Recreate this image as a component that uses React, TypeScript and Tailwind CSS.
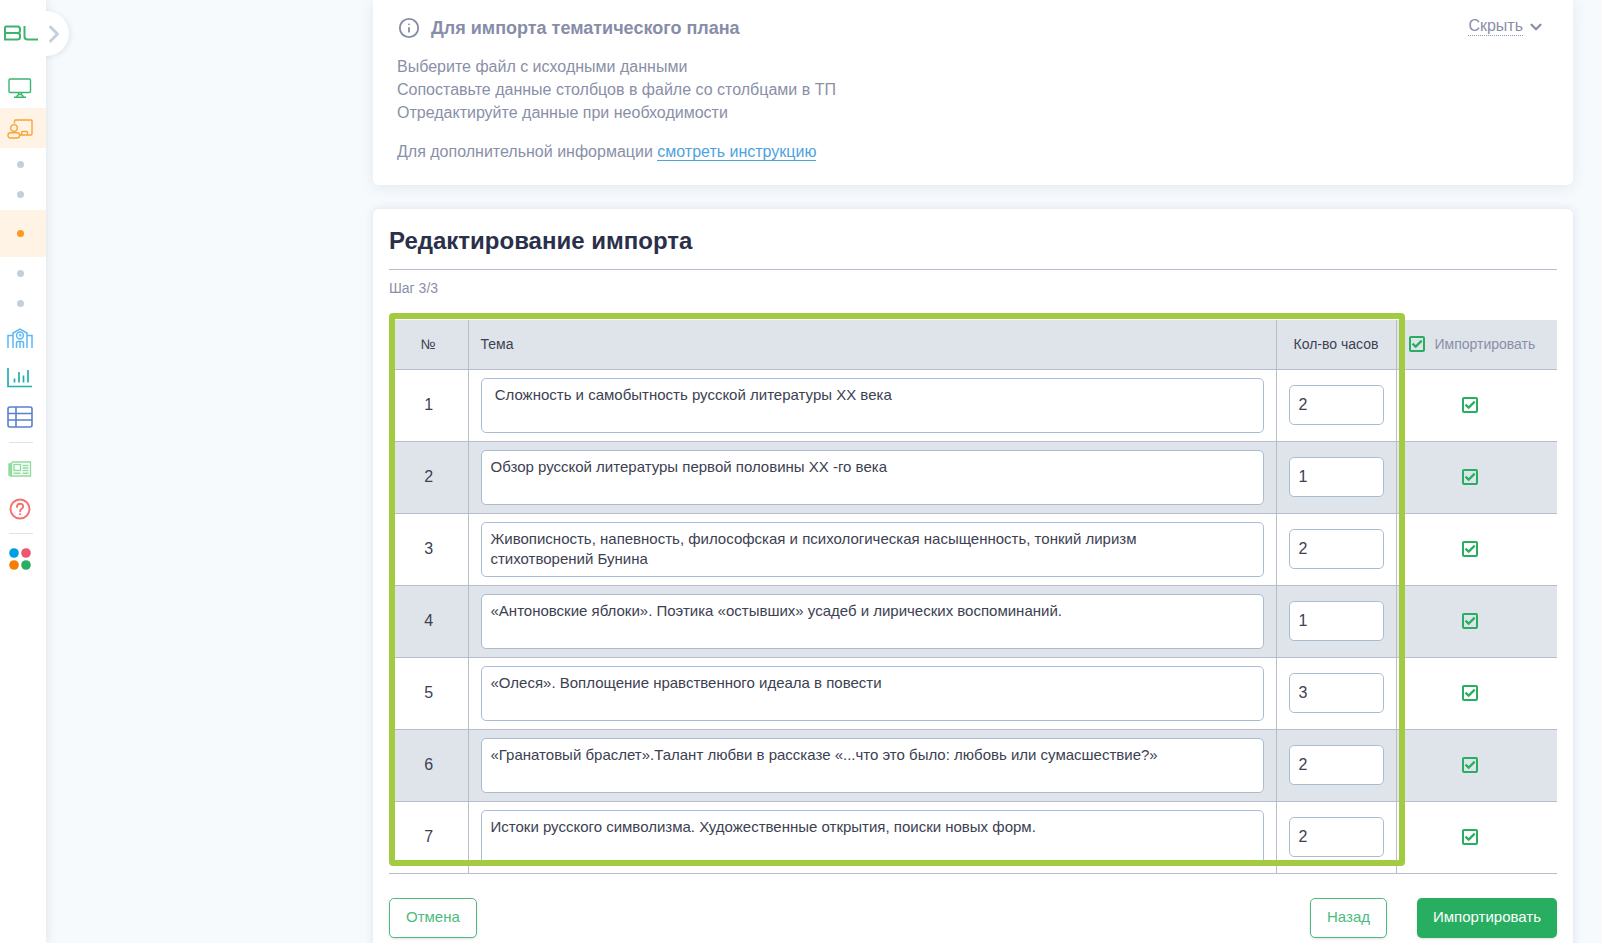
import { ChevronDown, ChevronRight, Info } from "lucide-react";

const rows = [
  { topic: " Сложность и самобытность русской литературы XX века", hours: "2" },
  { topic: "Обзор русской литературы первой половины XX -го века", hours: "1" },
  {
    topic:
      "Живописность, напевность, философская и психологическая насыщенность, тонкий лиризм стихотворений Бунина",
    hours: "2",
  },
  { topic: "«Антоновские яблоки». Поэтика «остывших» усадеб и лирических воспоминаний.", hours: "1" },
  { topic: "«Олеся». Воплощение нравственного идеала в повести", hours: "3" },
  {
    topic: "«Гранатовый браслет».Талант любви в рассказе «...что это было: любовь или сумасшествие?»",
    hours: "2",
  },
  { topic: "Истоки русского символизма. Художественные открытия, поиски новых форм.", hours: "2" },
];

function Dot({ active = false }: { active?: boolean }) {
  return (
    <a
      href="#"
      aria-label="Раздел"
      className={
        active
          ? "flex h-[47px] items-center justify-center bg-[#fff3e6] pr-[5px]"
          : "flex h-[30px] items-center justify-center pr-[5px]"
      }
    >
      <span className={active ? "size-[7px] rounded-full bg-[#fb9a1a]" : "size-[7px] rounded-full bg-[#c3d0dc]"} />
    </a>
  );
}

function Check({ label }: { label: string }) {
  return (
    <span className="relative inline-flex size-4 shrink-0">
      <input
        type="checkbox"
        defaultChecked
        aria-label={label}
        className="peer size-4 appearance-none rounded-[2px] border-2 border-[#27ae60]"
      />
      <svg
        viewBox="0 0 16 16"
        className="pointer-events-none absolute inset-0 hidden size-4 peer-checked:block"
        fill="none"
        stroke="#27ae60"
        strokeWidth="2.2"
      >
        <path d="M3.500 7.600l3.200 3 6-6" />
      </svg>
    </span>
  );
}

function Sidebar() {
  return (
    <aside className="relative z-10 w-[46px] shrink-0 bg-white shadow-[0_0_10px_rgba(90,110,130,0.18)]">
      {/* TOGGLE */}
      <button
        aria-label="Развернуть меню"
        className="absolute left-6 top-[11px] flex size-[45px] items-center justify-end rounded-full bg-white pr-px shadow-[2px_1px_4px_rgba(90,110,130,0.12)]"
      >
        <ChevronRight className="size-[28px] text-[#c3cfdc]" strokeWidth={2.5} />
      </button>

      <div className="relative bg-white">
        {/* LOGO */}
        <a href="#" aria-label="BL" className="flex h-[68px] items-center pb-[2px] pl-1">
          <svg width="34" height="16" viewBox="0 0 34 16" fill="none" stroke="#3db36f" strokeWidth="2">
            <path d="M1 1.500h12.500q2.500 0 2.500 2.500v1.500q0 2.500-2.500 2.500H1M13.500 8q2.500 0 2.500 2.500v1.500q0 2.500-2.500 2.500H1V1.500" />
            <path d="M20.500 1v10.500q0 3 3 3H34" />
          </svg>
        </a>

        <a href="#" aria-label="Рабочий стол" className="flex h-10 items-center justify-center pr-[6px]">
          <svg width="24" height="20" viewBox="0 0 24 20" fill="none" stroke="#3db36f" strokeWidth="1.4">
            <rect x="1" y="1" width="21.500" height="13.500" rx="1.200" />
            <path d="M10.500 14.500v2.300l-2 1.800M13.500 14.500v2.300l2 1.800M10.500 16.500h3M6 19.200h12" />
          </svg>
        </a>
        <a href="#" aria-label="Обучение" className="flex h-10 items-center justify-center bg-[#fff3e6] pr-[6px] pt-px">
          <svg width="26" height="20" viewBox="0 0 26 20" fill="none" stroke="#f7a535" strokeWidth="1.400">
            <path d="M7.500 4.500V2q0-1 1-1H24q1 0 1 1v13q0 1-1 1H12.500" />
            <circle cx="7" cy="8.900" r="3.300" />
            <rect x="1" y="13.800" width="11.500" height="5.200" rx="2.200" />
            <path d="M14.500 16v-2.500q0-1 1-1h4q1 0 1 1V16" />
          </svg>
        </a>
        <nav className="flex flex-col">
          <div className="py-px">
            <Dot />
            <Dot />
          </div>
          <Dot active />
          <div className="pt-px">
            <Dot />
            <Dot />
          </div>
        </nav>

        <a href="#" aria-label="Школа" className="flex h-10 items-center justify-center pr-[6px]">
          <svg width="26" height="20" viewBox="0 0 26 20" fill="none" stroke="#5cb8f5" strokeWidth="1.500">
            <path d="M1 20V7.500h5V20M20 20V7.500h5V20M6 7.500V5l7-4 7 4v2.500M9.500 20v-5q0-1.500 1.500-1.500h4q1.500 0 1.500 1.500v5M13 14v6" />
            <circle cx="13" cy="7.500" r="3.400" />
            <path d="M13 5.800v1.900h1.500" />
          </svg>
        </a>
        <a href="#" aria-label="Отчёты" className="flex h-[39px] items-center justify-center pr-[6px]">
          <svg width="26" height="20" viewBox="0 0 26 20" fill="none" stroke="#22aeb0" strokeWidth="1.700">
            <path d="M1 0v18.500h24M7.500 10.500v4M12 4v10.500M16.500 7.500v7M21 2v12.500" />
          </svg>
        </a>
        <a href="#" aria-label="Журнал" className="flex h-10 items-center justify-center pr-[6px]">
          <svg width="26" height="22" viewBox="0 0 26 22" fill="none" stroke="#5a7fd0" strokeWidth="1.600">
            <rect x="1" y="1" width="24" height="20" rx="2" />
            <path d="M1 7.500h24M1 14h24M9 1v20" />
          </svg>
        </a>
        <hr className="ml-[9px] mr-[13px] mt-[5px] border-[#dfe3e8]" />
        <a href="#" aria-label="Новости" className="mt-[6px] flex h-10 items-center justify-center pr-[6px]">
          <svg width="24" height="16" viewBox="0 0 24 16" fill="none" stroke="#8fdc9f" strokeWidth="1.400">
            <path d="M4 1h18.500v14H2.500q-1.500 0-1.500-1.500V3h2.500M3.500 1v14M2.300 3v11" />
            <rect x="6" y="3.500" width="6.500" height="6" />
            <path d="M14.500 4.500h6M14.500 7h6M14.500 9.500h6M5.500 12.300h7M14.500 12.300h6" />
          </svg>
        </a>
        <a href="#" aria-label="Помощь" className="flex h-[39px] items-center justify-center pr-[6px]">
          <svg width="22" height="22" viewBox="0 0 22 22" fill="none" stroke="#f4716c" strokeWidth="1.900">
            <circle cx="11" cy="11" r="9.500" />
            <path d="M8 9q0-3.300 3.100-3.300T14.200 8.500q0 1.300-1.600 2.300T11.200 13.200" strokeLinecap="round" />
            <path d="M11.200 15.300v1.700" />
          </svg>
        </a>
        <hr className="ml-[9px] mr-[13px] mt-[5px] border-[#dfe3e8]" />
        <a href="#" aria-label="Приложения" className="mt-[5px] flex h-10 items-center justify-center pr-[6px]">
          <svg width="22" height="22" viewBox="0 0 22 22">
            <circle cx="5" cy="5" r="4.800" fill="#009fe3" />
            <circle cx="17" cy="5" r="4.800" fill="#ec566f" />
            <circle cx="5" cy="17" r="4.800" fill="#f57f05" />
            <circle cx="17" cy="17" r="4.800" fill="#27ae60" />
          </svg>
        </a>
      </div>
    </aside>
  );
}

function InfoCard() {
  return (
    <section className="shrink-0 rounded-b-md bg-white pb-[22px] pl-6 pr-7 pt-4 text-[#8a8fa8] shadow-[0_2px_14px_rgba(100,120,140,0.14)]">
      <div className="flex items-start justify-between">
        <h2 className="flex items-center gap-[11px] pl-px text-lg leading-6 font-bold text-[#878da9]">
          <Info className="size-[22px]" strokeWidth={2} />
          Для импорта тематического плана
        </h2>
        <button className="flex items-center gap-1 pt-px text-base leading-5">
          <span className="border-b border-dotted border-[#8a9bb5] leading-[18px]">Скрыть</span>
          <ChevronDown className="size-[18px]" strokeWidth={3} />
        </button>
      </div>
      <div className="mt-[15px] text-base leading-[23px]">
        <p>Выберите файл с исходными данными</p>
        <p>Сопоставьте данные столбцов в файле со столбцами в ТП</p>
        <p>Отредактируйте данные при необходимости</p>
        <p className="mt-4">
          Для дополнительной информации{" "}
          <a href="#" className="border-b border-[#4da3e0] text-[#4da3e0]">
            смотреть инструкцию
          </a>
        </p>
      </div>
    </section>
  );
}

function ImportTable() {
  return (
    <div className="relative mt-[22px]">
      <table className="w-full table-fixed border-collapse text-[#3c4152]">
        <colgroup>
          <col className="w-[79px]" />
          <col />
          <col className="w-[120px]" />
          <col className="w-[161px]" />
        </colgroup>
        <thead>
          <tr className="h-[49px] border-b border-[#b7bdcb] bg-[#dfe4eb] text-sm">
            <th className="border-r border-[#b7bdcb] font-normal">№</th>
            <th className="border-r border-[#b7bdcb] px-3 text-left font-normal">Тема</th>
            <th className="border-r border-[#b7bdcb] font-normal">Кол-во часов</th>
            <th className="pl-3 text-left font-normal text-[#8a8fa8]">
              <span className="flex items-center gap-[10px]">
                <Check label="Импортировать все" />
                Импортировать
              </span>
            </th>
          </tr>
        </thead>
        <tbody>
          {rows.map((row, i) => (
            <tr key={i} className="h-[72px] border-b border-[#b7bdcb] even:bg-[#dfe4eb]">
              <td className="border-r border-[#b7bdcb] pl-px text-center text-base">{i + 1}</td>
              <td className="border-r border-[#b7bdcb] px-3">
                <textarea
                  aria-label={`Тема ${i + 1}`}
                  defaultValue={row.topic}
                  className="block h-[55px] w-full resize-none overflow-hidden rounded-[5px] border border-[#a9bdd0] bg-white py-[6px] pl-[9px] pr-8 text-[15px] leading-5"
                />
              </td>
              <td className="border-r border-[#b7bdcb] px-3">
                <input
                  type="text"
                  aria-label={`Кол-во часов ${i + 1}`}
                  defaultValue={row.hours}
                  className="block h-10 w-full rounded-[5px] border border-[#a9bdd0] bg-white px-[9px] text-base"
                />
              </td>
              <td className="pr-[14px] text-center align-middle">
                <span className="flex justify-center">
                  <Check label={`Импортировать ${i + 1}`} />
                </span>
              </td>
            </tr>
          ))}
        </tbody>
      </table>

      {/* Highlight around the editable columns */}
      <div className="pointer-events-none absolute bottom-2 left-0 right-[152px] top-[-7px] rounded-[4px] border-[6px] border-[#a3cb41]" />
    </div>
  );
}

export default function App() {
  return (
    <div className="flex h-screen overflow-hidden bg-[#f6fafd] font-['Liberation_Sans',Arial,sans-serif]">
      <Sidebar />

      <main className="flex min-w-0 flex-1 flex-col gap-6 pl-[327px] pr-[29px]">
        <InfoCard />

        <section className="flex-1 rounded-t-md bg-white px-4 pt-4 shadow-[0_0_8px_rgba(100,130,160,0.2)]">
          <h1 className="border-b border-[#b7bdcb] pb-3 text-2xl leading-8 font-bold text-[#2b304a]">
            Редактирование импорта
          </h1>
          <p className="mt-2 text-sm leading-5 text-[#8a8fa8]">Шаг 3/3</p>

          <ImportTable />

          <div className="mt-6 flex pb-5 text-[15px]">
            <button className="h-10 rounded-[5px] border border-[#4dbb7d] px-4 text-[#4dbb7d] shadow-sm">Отмена</button>
            <button className="ml-auto h-10 rounded-[5px] border border-[#4dbb7d] px-4 text-[#4dbb7d] shadow-sm">
              Назад
            </button>
            <button className="ml-[30px] h-10 rounded-[5px] bg-[#27ae60] px-4 text-white shadow-sm">Импортировать</button>
          </div>
        </section>
      </main>
    </div>
  );
}
